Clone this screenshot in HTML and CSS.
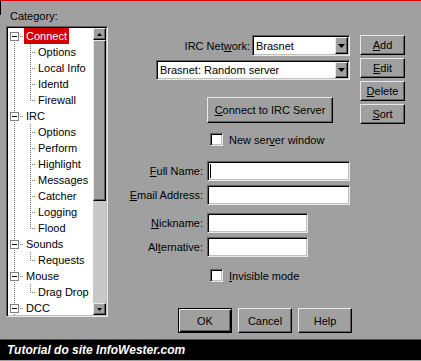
FILE: index.html
```html
<!DOCTYPE html>
<html lang="pt">
<head>
    <meta charset="UTF-8">
    <meta name="viewport" content="width=device-width, initial-scale=1.0">
    <title>mIRC Options</title>
    <link rel="stylesheet" href="styles.css">
</head>
<body>
    <svg class="defs" width="0" height="0">
        <symbol id="node-first" viewBox="0 0 16 16">
            <line class="dot" x1="6.5" y1="12" x2="6.5" y2="16"/>
            <line class="dot" x1="12" y1="8.5" x2="16" y2="8.5"/>
            <rect x="2.5" y="4.5" width="8" height="8" fill="#fff" stroke="#808080"/>
            <path d="M4 8.5h5" stroke="#000"/>
        </symbol>
        <symbol id="node" viewBox="0 0 16 16">
            <line class="dot" x1="6.5" y1="0" x2="6.5" y2="16"/>
            <line class="dot" x1="12" y1="8.5" x2="16" y2="8.5"/>
            <rect x="2.5" y="4.5" width="8" height="8" fill="#fff" stroke="#808080"/>
            <path d="M4 8.5h5" stroke="#000"/>
        </symbol>
        <symbol id="child" viewBox="0 0 28 16">
            <line class="dot" x1="6.5" y1="0" x2="6.5" y2="16"/>
            <line class="dot" x1="22.5" y1="0" x2="22.5" y2="16"/>
            <line class="dot" x1="24" y1="8.5" x2="28" y2="8.5"/>
        </symbol>
        <symbol id="child-last" viewBox="0 0 28 16">
            <line class="dot" x1="6.5" y1="0" x2="6.5" y2="16"/>
            <line class="dot" x1="22.5" y1="0" x2="22.5" y2="9"/>
            <line class="dot" x1="24" y1="8.5" x2="28" y2="8.5"/>
        </symbol>
    </svg>

    <div class="dialog">
        <div class="category">
            <div class="category-label">Category:</div>
            <div class="tree-box sunken">
                <ul class="tree">
                    <li><svg class="wire" width="16" height="16"><use href="#node-first"/></svg><span class="item selected">Connect</span></li>
                    <li><svg class="wire" width="28" height="16"><use href="#child"/></svg><span class="item">Options</span></li>
                    <li><svg class="wire" width="28" height="16"><use href="#child"/></svg><span class="item">Local Info</span></li>
                    <li><svg class="wire" width="28" height="16"><use href="#child"/></svg><span class="item">Identd</span></li>
                    <li><svg class="wire" width="28" height="16"><use href="#child-last"/></svg><span class="item">Firewall</span></li>
                    <li><svg class="wire" width="16" height="16"><use href="#node"/></svg><span class="item">IRC</span></li>
                    <li><svg class="wire" width="28" height="16"><use href="#child"/></svg><span class="item">Options</span></li>
                    <li><svg class="wire" width="28" height="16"><use href="#child"/></svg><span class="item">Perform</span></li>
                    <li><svg class="wire" width="28" height="16"><use href="#child"/></svg><span class="item">Highlight</span></li>
                    <li><svg class="wire" width="28" height="16"><use href="#child"/></svg><span class="item">Messages</span></li>
                    <li><svg class="wire" width="28" height="16"><use href="#child"/></svg><span class="item">Catcher</span></li>
                    <li><svg class="wire" width="28" height="16"><use href="#child"/></svg><span class="item">Logging</span></li>
                    <li><svg class="wire" width="28" height="16"><use href="#child-last"/></svg><span class="item">Flood</span></li>
                    <li><svg class="wire" width="16" height="16"><use href="#node"/></svg><span class="item">Sounds</span></li>
                    <li><svg class="wire" width="28" height="16"><use href="#child-last"/></svg><span class="item">Requests</span></li>
                    <li><svg class="wire" width="16" height="16"><use href="#node"/></svg><span class="item">Mouse</span></li>
                    <li><svg class="wire" width="28" height="16"><use href="#child-last"/></svg><span class="item">Drag Drop</span></li>
                    <li><svg class="wire" width="16" height="16"><use href="#node"/></svg><span class="item">DCC</span></li>
                </ul>
                <div class="scrollbar">
                    <div class="scroll-btn raised">
                        <svg width="5" height="3"><polygon points="2.5,0 5,3 0,3" fill="#000"/></svg>
                    </div>
                    <div class="scroll-thumb raised"></div>
                    <div class="scroll-track"></div>
                    <div class="scroll-btn raised">
                        <svg width="5" height="3"><polygon points="0,0 5,0 2.5,3" fill="#000"/></svg>
                    </div>
                </div>
            </div>
        </div>

        <div class="settings">
            <div class="net-row">
                <span>IRC Net<u>w</u>ork:</span>
                <div class="combo net sunken">
                    <span class="combo-text">Brasnet</span>
                    <div class="combo-btn raised">
                        <svg width="7" height="4"><polygon points="0,0 7,0 3.5,4" fill="#000"/></svg>
                    </div>
                </div>
            </div>
            <div class="combo server sunken">
                <span class="combo-text">Brasnet: Random server</span>
                <div class="combo-btn raised">
                    <svg width="7" height="4"><polygon points="0,0 7,0 3.5,4" fill="#000"/></svg>
                </div>
            </div>

            <div class="btn raised connect-btn"><u>C</u>onnect to IRC Server</div>

            <label class="check new-window">
                <span class="check-box sunken"></span>
                <span>New ser<u>v</u>er window</span>
            </label>

            <div class="fields">
                <span class="field-label"><u>F</u>ull Name:</span>
                <div class="field sunken"><span class="caret"></span></div>
                <span class="field-label"><u>E</u>mail Address:</span>
                <div class="field sunken"></div>
            </div>

            <div class="fields nick">
                <span class="field-label"><u>N</u>ickname:</span>
                <div class="field sunken"></div>
                <span class="field-label">Al<u>t</u>ernative:</span>
                <div class="field sunken"></div>
            </div>

            <label class="check invisible">
                <span class="check-box sunken"></span>
                <span><u>I</u>nvisible mode</span>
            </label>

            <div class="dialog-buttons">
                <div class="btn default">OK</div>
                <div class="btn raised">Cancel</div>
                <div class="btn raised">Help</div>
            </div>
        </div>

        <div class="side-buttons">
            <div class="btn raised"><u>A</u>dd</div>
            <div class="btn raised"><u>E</u>dit</div>
            <div class="btn raised"><u>D</u>elete</div>
            <div class="btn raised"><u>S</u>ort</div>
        </div>
    </div>

    <div class="footer">Tutorial do site InfoWester.com</div>
</body>
</html>
```

FILE: styles.css
```css
* {
    box-sizing: border-box;
}

body {
    margin: 0;
    width: 421px;
    height: 361px;
    overflow: hidden;
    background: #a0a0a0;
    font-family: "Liberation Sans", Arial, sans-serif;
    font-size: 11px;
    color: #000;
}

.defs {
    position: absolute;
    width: 0;
    height: 0;
}

/* bevels */
.sunken {
    border: 1px solid;
    border-color: #606060 #e8e8e8 #e8e8e8 #606060;
    box-shadow: inset 1px 1px #000, inset -1px -1px #c0c0c0;
    background: #fff;
    padding: 1px;
}

.raised {
    border: 1px solid;
    border-color: #e8e8e8 #000 #000 #e8e8e8;
    box-shadow: inset -1px -1px #606060;
    background: #a0a0a0;
}

.dialog {
    position: relative;
    display: flex;
    height: 339px;
    border-top: 1px solid #e00000;
    padding-left: 6px;
}

.dialog::before {
    content: "";
    position: absolute;
    left: 0;
    top: -1px;
    width: 1px;
    height: 15px;
    background: #000;
}

/* category tree */
.category {
    width: 102px;
    padding-top: 8px;
}

.category-label {
    line-height: 14px;
    margin: 0 0 3px 4px;
}

.tree-box {
    display: flex;
    height: 291px;
}

.tree {
    flex: 1;
    list-style: none;
    margin: 0;
    padding: 0;
    overflow: hidden;
}

.tree li {
    display: flex;
    height: 16px;
    line-height: 16px;
    white-space: nowrap;
}

.wire {
    flex: none;
    shape-rendering: crispEdges;
}

.dot {
    stroke: #707070;
    stroke-dasharray: 1 1;
}

.item {
    padding: 0 2px;
}

.item.selected {
    background: #d40000;
    color: #fff;
}

.scrollbar {
    width: 13px;
    display: flex;
    flex-direction: column;
}

.scroll-btn {
    height: 12px;
    display: flex;
    align-items: center;
    justify-content: center;
}

.scroll-btn svg {
    display: block;
}

.scroll-thumb {
    height: 161px;
}

.scroll-track {
    flex: 1;
    background: #c8c8c8;
}

/* settings */
.settings {
    width: 244px;
    padding-top: 34px;
}

.net-row {
    display: flex;
    justify-content: flex-end;
    align-items: center;
    gap: 2px;
    height: 21px;
    margin-right: 2px;
}

.combo {
    display: flex;
    align-items: center;
}

.combo.net {
    width: 98px;
    height: 21px;
}

.combo.server {
    width: 194px;
    height: 20px;
    margin: 4px 0 0 48px;
}

.combo-text {
    flex: 1;
    padding-left: 2px;
    white-space: nowrap;
    overflow: hidden;
}

.combo-btn {
    width: 13px;
    height: 100%;
    display: flex;
    align-items: center;
    justify-content: center;
}

.combo-btn svg {
    display: block;
}

.btn {
    display: flex;
    align-items: center;
    justify-content: center;
    height: 20px;
    white-space: nowrap;
}

.btn.default {
    border: 1px solid #000;
    box-shadow: inset 1px 1px #e8e8e8, inset -1px -1px #000, inset -2px -2px #606060;
}

.connect-btn {
    width: 126px;
    height: 26px;
    margin: 17px 0 0 99px;
}

.check {
    display: flex;
    align-items: center;
    gap: 6px;
    height: 13px;
    margin-left: 102px;
}

.check-box {
    width: 13px;
    height: 13px;
}

.new-window {
    margin-top: 10px;
}

.invisible {
    margin-top: 12px;
}

.fields {
    display: grid;
    grid-template-columns: 95px 143px;
    grid-auto-rows: 20px;
    column-gap: 4px;
    row-gap: 4px;
    margin-top: 15px;
}

.fields.nick {
    grid-template-columns: 95px 101px;
    margin-top: 8px;
}

.field-label {
    text-align: right;
    align-self: center;
    white-space: nowrap;
}

.field {
    display: flex;
    align-items: center;
    padding: 1px 2px;
}

.caret {
    width: 1px;
    height: 14px;
    background: #000;
}

.dialog-buttons {
    display: flex;
    gap: 6px;
    margin: 26px 0 0 70px;
}

.dialog-buttons .btn {
    width: 54px;
    height: 25px;
}

.side-buttons {
    display: flex;
    flex-direction: column;
    gap: 3px;
    width: 45px;
    margin-left: 8px;
    padding-top: 34px;
}

/* footer strip */
.footer {
    height: 21px;
    border-top: 1px solid #505050;
    background: #000;
    color: #fff;
    font-size: 12px;
    font-weight: bold;
    font-style: italic;
    line-height: 20px;
    padding-left: 7px;
}
```
